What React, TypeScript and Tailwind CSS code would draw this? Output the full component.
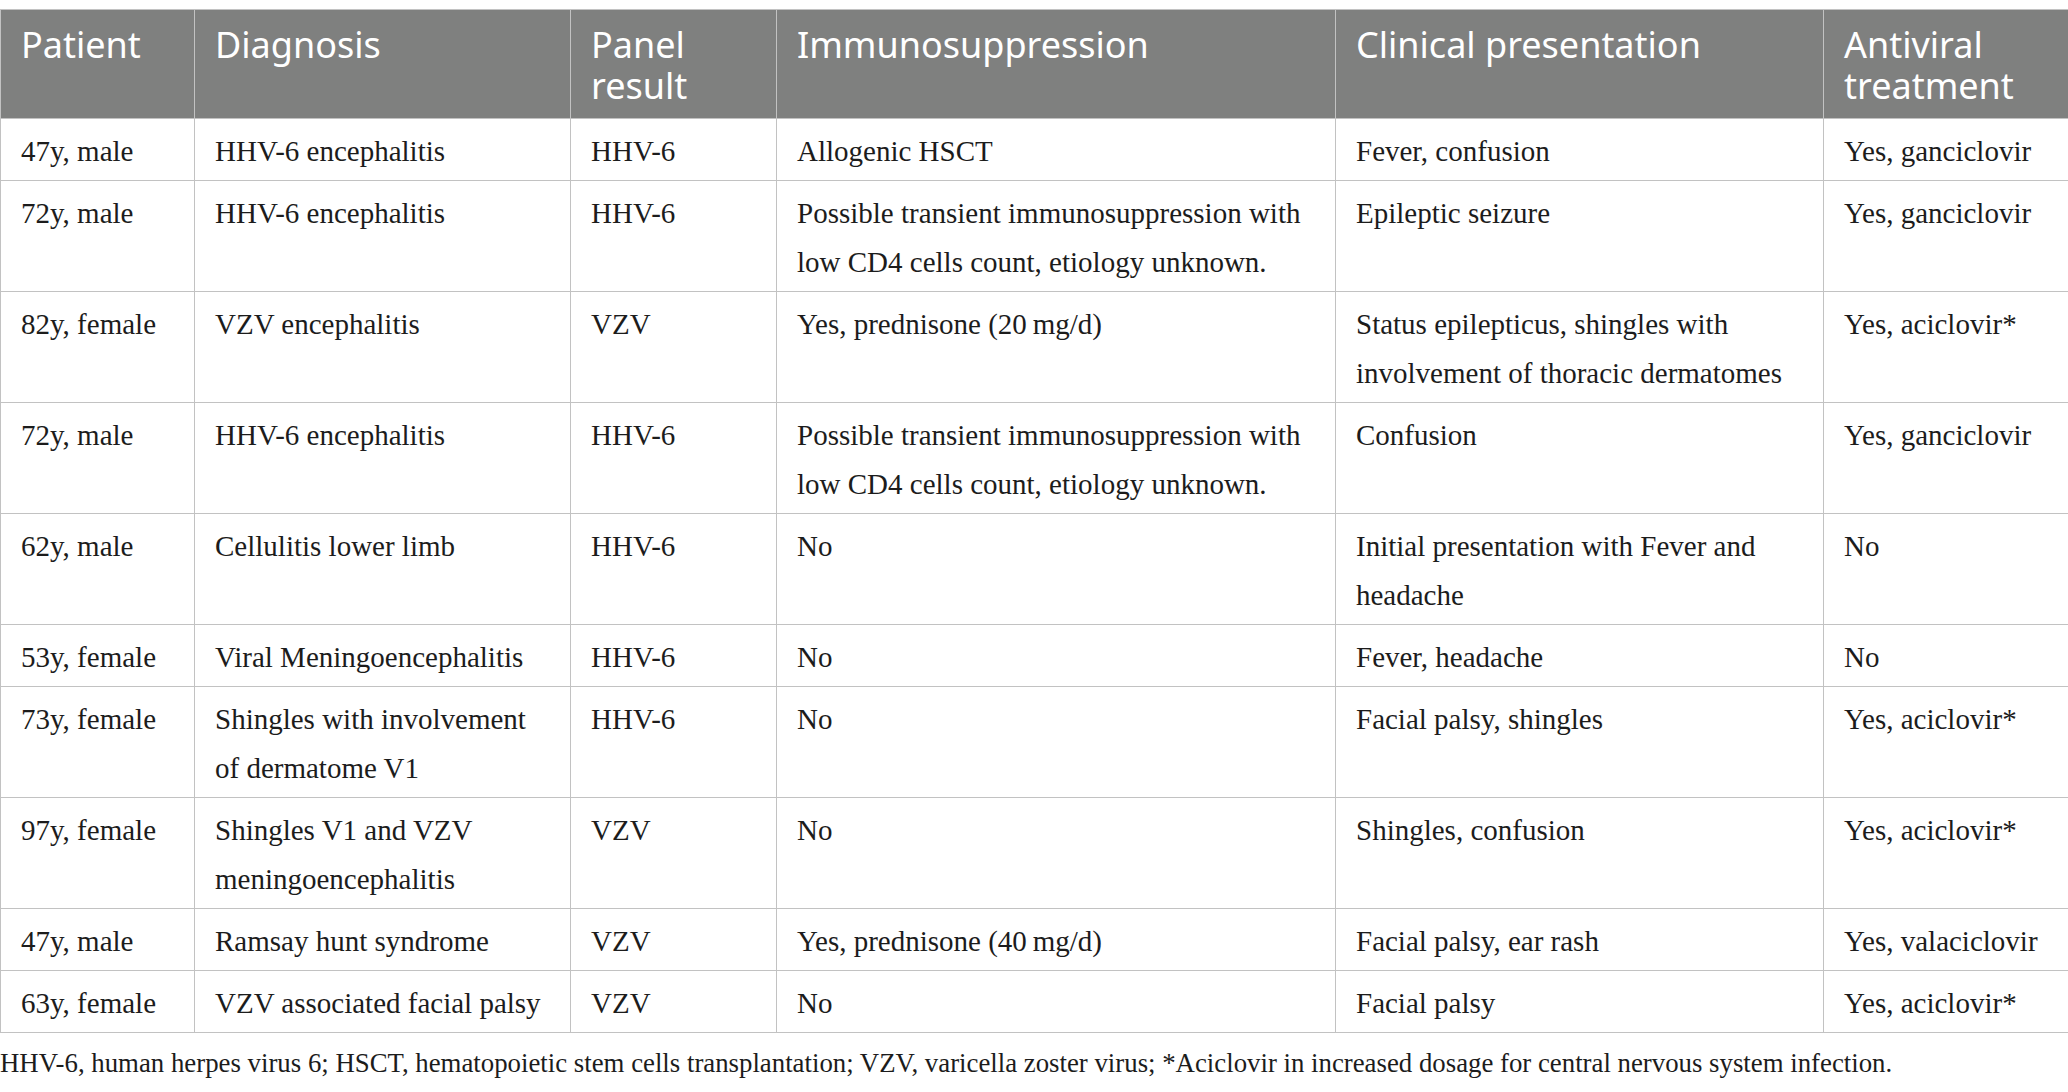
import React from "react"

type Row = {
  patient: string
  diagnosis: string
  panel: string
  immuno: string
  clinical: string
  antiviral: string
}

const rows: Row[] = [
  { patient: "47y, male", diagnosis: "HHV-6 encephalitis", panel: "HHV-6", immuno: "Allogenic HSCT", clinical: "Fever, confusion", antiviral: "Yes, ganciclovir" },
  { patient: "72y, male", diagnosis: "HHV-6 encephalitis", panel: "HHV-6", immuno: "Possible transient immunosuppression with low CD4 cells count, etiology unknown.", clinical: "Epileptic seizure", antiviral: "Yes, ganciclovir" },
  { patient: "82y, female", diagnosis: "VZV encephalitis", panel: "VZV", immuno: "Yes, prednisone (20\u2009mg/d)", clinical: "Status epilepticus, shingles with involvement of thoracic dermatomes", antiviral: "Yes, aciclovir*" },
  { patient: "72y, male", diagnosis: "HHV-6 encephalitis", panel: "HHV-6", immuno: "Possible transient immunosuppression with low CD4 cells count, etiology unknown.", clinical: "Confusion", antiviral: "Yes, ganciclovir" },
  { patient: "62y, male", diagnosis: "Cellulitis lower limb", panel: "HHV-6", immuno: "No", clinical: "Initial presentation with Fever and headache", antiviral: "No" },
  { patient: "53y, female", diagnosis: "Viral Meningoencephalitis", panel: "HHV-6", immuno: "No", clinical: "Fever, headache", antiviral: "No" },
  { patient: "73y, female", diagnosis: "Shingles with involvement of dermatome V1", panel: "HHV-6", immuno: "No", clinical: "Facial palsy, shingles", antiviral: "Yes, aciclovir*" },
  { patient: "97y, female", diagnosis: "Shingles V1 and VZV meningoencephalitis", panel: "VZV", immuno: "No", clinical: "Shingles, confusion", antiviral: "Yes, aciclovir*" },
  { patient: "47y, male", diagnosis: "Ramsay hunt syndrome", panel: "VZV", immuno: "Yes, prednisone (40\u2009mg/d)", clinical: "Facial palsy, ear rash", antiviral: "Yes, valaciclovir" },
  { patient: "63y, female", diagnosis: "VZV associated facial palsy", panel: "VZV", immuno: "No", clinical: "Facial palsy", antiviral: "Yes, aciclovir*" },
]

const headers = ["Patient", "Diagnosis", "Panel result", "Immunosuppression", "Clinical presentation", "Antiviral treatment"]

export default function App() {
  return (
    <div className="w-[2068px] bg-white pt-[9px]">
      <table className="w-full table-fixed border-collapse">
        <colgroup>
          <col className="w-[194px]" />
          <col className="w-[376px]" />
          <col className="w-[206px]" />
          <col className="w-[559px]" />
          <col className="w-[488px]" />
          <col className="w-[245px]" />
        </colgroup>
        <thead>
          <tr className="bg-[#7f807f]">
            {headers.map((h) => (
              <th key={h}
                className="border border-[#c2c2c2] px-[20px] pt-[14px] pb-[12px] text-left align-top font-['Noto_Sans',sans-serif] text-[36px] font-normal leading-[41px] text-white">
                {h}
              </th>
            ))}
          </tr>
        </thead>
        <tbody className="font-['Liberation_Serif',serif] text-[29px] leading-[49px] text-[#1c1c1c]">
          {rows.map((r, i) => (
            <tr key={i}>
              {[r.patient, r.diagnosis, r.panel, r.immuno, r.clinical, r.antiviral].map((c, j) => (
                <td key={j} className="border border-[#c2c2c2] px-[20px] pt-[8px] pb-[4px] align-top">
                  {c}
                </td>
              ))}
            </tr>
          ))}
        </tbody>
      </table>
      <p className="pt-[10px] font-['Liberation_Serif',serif] text-[26.8px] leading-[40px] text-[#1c1c1c]">
        HHV-6, human herpes virus 6; HSCT, hematopoietic stem cells transplantation; VZV, varicella zoster virus; *Aciclovir in increased dosage for central nervous system infection.
      </p>
    </div>
  )
}
